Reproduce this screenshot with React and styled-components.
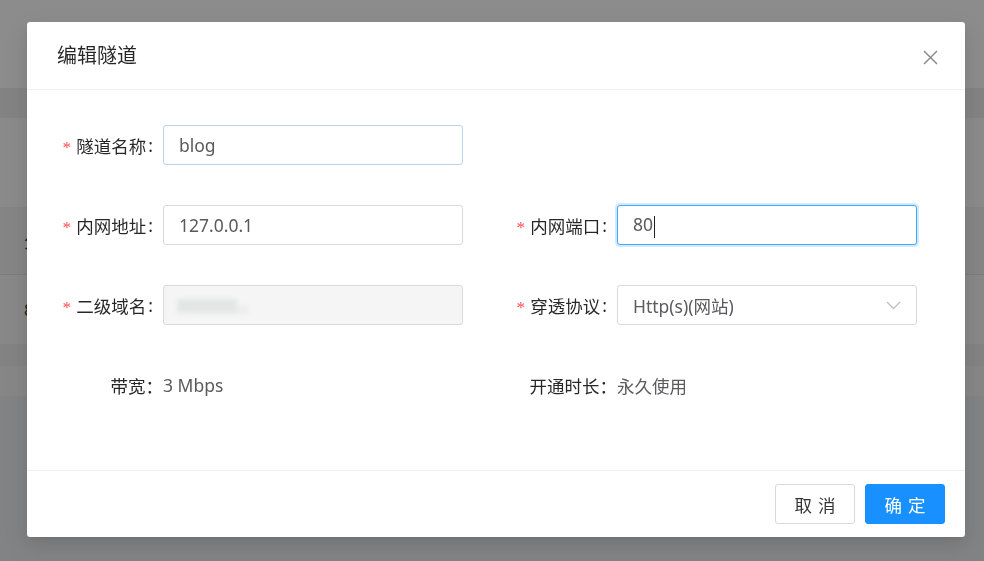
import React from 'react'
import styled, { createGlobalStyle } from 'styled-components'

const GlobalStyle = createGlobalStyle`
  html, body { margin: 0; padding: 0; }
  body {
    width: 984px;
    height: 561px;
    overflow: hidden;
    font-family: "Noto Sans", "Noto Sans CJK SC", sans-serif;
    background: #edeef0;
  }
`

/* page behind the mask */
const Page = styled.div`
  display: flex;
  flex-direction: column;
  height: 561px;
`

const Band = styled.div`
  height: ${p => p.$h}px;
  background: ${p => p.$bg};
  border-bottom: ${p => (p.$line ? '1px solid #e2e2e2' : 'none')};
  display: flex;
  align-items: center;
  padding-left: 24px;
  font-size: 17px;
  color: #333;
  box-sizing: border-box;
`

const Mask = styled.div`
  position: fixed;
  inset: 0;
  background: rgba(0, 0, 0, 0.45);
`

const ModalWrap = styled.div`
  position: fixed;
  inset: 0;
  padding: 22px 0 0 27px;
`

const Modal = styled.div`
  width: 938px;
  background: #fff;
  border-radius: 3px;
  box-shadow: 0 3px 6px -4px rgba(0, 0, 0, 0.12), 0 6px 16px 0 rgba(0, 0, 0, 0.08),
    0 9px 28px 8px rgba(0, 0, 0, 0.05);
  display: flex;
  flex-direction: column;
`

const Header = styled.div`
  height: 67px;
  border-bottom: 1px solid #f0f0f0;
  display: flex;
  align-items: center;
  justify-content: space-between;
  padding-left: 30px;
`

const Title = styled.div`
  font-size: 20px;
  color: rgba(0, 0, 0, 0.85);
  line-height: 28px;
`

const Close = styled.button`
  width: 70px;
  height: 67px;
  border: 0;
  background: transparent;
  display: flex;
  align-items: center;
  justify-content: center;
  padding: 0;
  margin-top: 3px;
`

const Body = styled.div`
  height: 380px;
  box-sizing: border-box;
  padding: 35px 30px 0 30px;
`

const FormGrid = styled.div`
  display: grid;
  grid-template-columns: 454px 1fr;
  grid-auto-rows: 40px;
  row-gap: 40px;
`

const Item = styled.div`
  display: flex;
  align-items: center;
  height: 40px;
  font-size: 17.5px;
`

const Label = styled.div`
  width: ${p => p.$w || 106}px;
  flex: none;
  display: flex;
  justify-content: flex-end;
  align-items: center;
  color: rgba(0, 0, 0, 0.85);
  white-space: nowrap;
`

const Star = styled.span`
  color: #ff4d4f;
  font-family: "Liberation Serif", serif;
  font-size: 17.5px;
  margin-right: 5px;
  margin-top: 4px;
`

const Colon = styled.span`
  margin: 0 10px 0 2px;
`

const Field = styled.div`
  width: 300px;
  height: 40px;
  box-sizing: border-box;
  border: 1px solid
    ${p =>
      p.$state === 'focus' ? '#40a9ff' : p.$state === 'hover' ? '#bcd3ea' : '#d9d9d9'};
  box-shadow: ${p => (p.$state === 'focus' ? '0 0 0 2px rgba(24, 144, 255, 0.2)' : 'none')};
  background: ${p => (p.$state === 'disabled' ? '#f5f5f5' : '#fff')};
  border-radius: 3px;
  padding: 0 15px;
  display: flex;
  align-items: center;
  justify-content: space-between;
  color: #5a5a5f;
  font-size: 17.5px;
`

const Caret = styled.span`
  display: inline-block;
  width: 1px;
  height: 22px;
  background: #222;
  vertical-align: middle;
  margin-left: 1px;
`

const Blurred = styled.span`
  display: block;
  width: 60px;
  height: 14px;
  margin: 2px 0 0 -2px;
  background: #e4e6e5;
  filter: blur(2px);
  box-shadow: 14px 4px 0 -3px #ebedec;
`

const Value = styled.span`
  color: #5a5a5f;
`

const Footer = styled.div`
  border-top: 1px solid #f0f0f0;
  padding: 13px 20px 13px;
  display: flex;
  justify-content: flex-end;
  gap: 10px;
`

const Button = styled.button`
  height: 40px;
  padding: 0 18px;
  min-width: 80px;
  white-space: nowrap;
  font-family: inherit;
  font-size: 17.5px;
  border-radius: 3px;
  border: 1px solid ${p => (p.$primary ? '#1890ff' : '#d9d9d9')};
  background: ${p => (p.$primary ? '#1890ff' : '#fff')};
  color: ${p => (p.$primary ? '#fff' : 'rgba(0, 0, 0, 0.8)')};
  & > span {
    letter-spacing: 0.34em;
    margin-right: -0.34em;
  }
`

const CloseIcon = () => (
  <svg width="15" height="15" viewBox="0 0 15 15">
    <path d="M1 1 L14 14 M14 1 L1 14" stroke="#8c8c8c" strokeWidth="1.5" fill="none" />
  </svg>
)

const Chevron = () => (
  <svg width="15" height="9" viewBox="0 0 15 9">
    <path d="M1 1 L7.5 7.5 L14 1" stroke="#bfbfbf" strokeWidth="1.3" fill="none" />
  </svg>
)

const FormLabel = ({ text, required = true, w }) => (
  <Label $w={w}>
    {required && <Star>*</Star>}
    {text}
    <Colon>:</Colon>
  </Label>
)

export default function App() {
  return (
    <>
      <GlobalStyle />
      <Page>
        <Band $h={88} $bg="#ffffff" />
        <Band $h={30} $bg="#eeeff0" />
        <Band $h={89} $bg="#fbfbfb" />
        <Band $h={68} $bg="#f2f2f2" $line>分</Band>
        <Band $h={69} $bg="#f7f7f7">8</Band>
        <Band $h={22} $bg="#eeeeee" />
        <Band $h={30} $bg="#f5f5f5" />
      </Page>
      <Mask />
      <ModalWrap>
        <Modal>
          <Header>
            <Title>编辑隧道</Title>
            <Close aria-label="close">
              <CloseIcon />
            </Close>
          </Header>
          <Body>
            <FormGrid>
              <Item>
                <FormLabel text="隧道名称" />
                <Field $state="hover">blog</Field>
              </Item>
              <div />
              <Item>
                <FormLabel text="内网地址" />
                <Field>127.0.0.1</Field>
              </Item>
              <Item>
                <FormLabel text="内网端口" />
                <Field $state="focus">
                  <span>
                    80
                    <Caret />
                  </span>
                </Field>
              </Item>
              <Item>
                <FormLabel text="二级域名" />
                <Field $state="disabled">
                  <Blurred />
                </Field>
              </Item>
              <Item>
                <FormLabel text="穿透协议" />
                <Field>
                  <span>Http(s)(网站)</span>
                  <Chevron />
                </Field>
              </Item>
              <Item>
                <Label>带宽：</Label>
                <Value>3 Mbps</Value>
              </Item>
              <Item>
                <Label>开通时长：</Label>
                <Value>永久使用</Value>
              </Item>
            </FormGrid>
          </Body>
          <Footer>
            <Button>
              <span>取消</span>
            </Button>
            <Button $primary>
              <span>确定</span>
            </Button>
          </Footer>
        </Modal>
      </ModalWrap>
    </>
  )
}
